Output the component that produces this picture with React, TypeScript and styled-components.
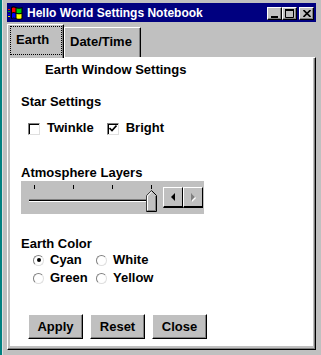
import React from "react";
import styled, { createGlobalStyle } from "styled-components";

const FONT = `"Liberation Sans", Arial, Helvetica, sans-serif`;

const Global = createGlobalStyle`
  html, body { margin: 0; padding: 0; background: #c0c0c0; }
  body { font-family: ${FONT}; }
  * { box-sizing: border-box; }
`;

const Desktop = styled.div`
  width: 321px;
  height: 355px;
  overflow: hidden;
  background: #008080;
  display: flex;
  padding-left: 2px;
`;

const Window = styled.div`
  flex: 1;
  background: #c0c0c0;
  border-left: 1px solid #dfdfdf;
  padding: 3px 5px 0 4px;
  display: flex;
  flex-direction: column;
  font: bold 13px/15px ${FONT};
  color: #000;
`;

const TitleBar = styled.div`
  height: 19px;
  background: #000080;
  display: flex;
  align-items: center;
  padding: 0 2px 0 1px;
  gap: 4px;
  color: #fff;
  font-size: 12px;
  line-height: 14px;
`;

const TitleText = styled.span`
  flex: 1;
  white-space: nowrap;
`;

const TitleControls = styled.div`
  display: flex;
  align-items: center;
  margin-top: 1px;
`;

const TitleButton = styled.div<{ $gap?: boolean }>`
  width: 15px;
  height: 13px;
  margin-left: ${(p) => (p.$gap ? 2 : 0)}px;
  background: #c0c0c0;
  border-top: 1px solid #fff;
  border-left: 1px solid #fff;
  border-right: 1px solid #000;
  border-bottom: 1px solid #000;
  box-shadow: inset -1px -1px #808080;
  display: flex;
  align-items: center;
  justify-content: center;
`;

const TabRow = styled.div`
  display: flex;
  align-items: flex-end;
  margin-top: 2px;
  height: 33px;
`;

const Tab = styled.div<{ $active?: boolean; $w: number }>`
  position: relative;
  z-index: ${(p) => (p.$active ? 1 : 0)};
  width: ${(p) => p.$w}px;
  height: ${(p) => (p.$active ? 34 : 30)}px;
  margin-bottom: ${(p) => (p.$active ? -1 : 0)}px;
  background: #c0c0c0;
  border-top: 1px solid #fff;
  border-left: 1px solid #fff;
  border-right: 1px solid #000;
  border-top-left-radius: 1px;
  border-top-right-radius: 1px;
  box-shadow: inset -1px 0 #808080;
  padding: ${(p) => (p.$active ? "1px 2px 0 2px" : "6px 0 0 5px")};
  white-space: nowrap;
`;

const FocusRing = styled.div`
  width: 52px;
  height: 29px;
  border: 1px dotted #000;
  padding: 5px 0 0 5px;
`;

const Panel = styled.div`
  height: 293px;
  border-top: 1px solid #fff;
  border-left: 1px solid #fff;
  border-right: 1px solid #000;
  border-bottom: 1px solid #000;
  box-shadow: inset -1px -1px #808080;
  padding: 0 2px 3px 2px;
  display: flex;
`;

const Content = styled.div`
  flex: 1;
  background: #fff;
  display: flex;
  flex-direction: column;
  align-items: flex-start;
  padding: 4px 0 0 11px;
`;

const Heading = styled.div`
  margin-left: 24px;
`;

const SectionLabel = styled.div<{ $mt: number }>`
  margin-top: ${(p) => p.$mt}px;
`;

const CheckRow = styled.div`
  display: flex;
  align-items: center;
  margin: 11px 0 0 7px;
  gap: 13px;
`;

const Option = styled.label`
  display: flex;
  align-items: center;
  gap: 7px;
  white-space: nowrap;
`;

const CheckBox = styled.span`
  width: 12px;
  height: 12px;
  margin-top: 2px;
  background: #fff;
  border-top: 1px solid #808080;
  border-left: 1px solid #808080;
  border-right: 1px solid #dfdfdf;
  border-bottom: 1px solid #dfdfdf;
  box-shadow: inset 1px 1px #000;
  display: flex;
  align-items: center;
  justify-content: center;
`;

const SliderBox = styled.div`
  margin-top: 1px;
  width: 183px;
  height: 33px;
  background: #c0c0c0;
  display: flex;
`;

const TrackArea = styled.div`
  position: relative;
  width: 142px;
  display: flex;
  flex-direction: column;
`;

const Ticks = styled.div`
  display: flex;
  gap: 38px;
  margin: 4px 0 0 13px;
  height: 4px;
`;

const Tick = styled.span`
  width: 1px;
  height: 4px;
  background: #000;
`;

const Track = styled.div`
  margin: 10px 0 0 8px;
  width: 126px;
  height: 3px;
  border-top: 1px solid #808080;
  background: #000;
  border-bottom: 1px solid #fff;
`;

const Thumb = styled.svg`
  position: absolute;
  left: 125px;
  top: 9px;
`;

const ArrowGroup = styled.div`
  display: flex;
  margin-top: 6px;
  height: 21px;
`;

const ArrowButton = styled.div`
  width: 20px;
  height: 21px;
  background: #c0c0c0;
  border-top: 1px solid #fff;
  border-left: 1px solid #fff;
  border-right: 1px solid #000;
  border-bottom: 2px solid #000;
  display: flex;
  align-items: center;
  justify-content: center;
`;

const RadioGrid = styled.div`
  display: grid;
  grid-template-columns: 63px auto;
  row-gap: 3px;
  margin: 1px 0 0 12px;
`;

const RadioOption = styled.label`
  display: flex;
  align-items: center;
  gap: 6px;
  white-space: nowrap;
`;

const Radio = styled.span<{ $on?: boolean }>`
  width: 11px;
  height: 11px;
  margin-top: 1px;
  border-radius: 50%;
  background: #fff;
  border: 1px solid;
  border-color: #808080 #dfdfdf #dfdfdf #808080;
  display: flex;
  align-items: center;
  justify-content: center;
  &::after {
    content: "";
    width: 4px;
    height: 4px;
    border-radius: 50%;
    background: ${(p) => (p.$on ? "#000" : "transparent")};
  }
`;

const ButtonRow = styled.div`
  display: flex;
  gap: 7px;
  margin: 29px 0 0 7px;
`;

const Button = styled.div`
  width: 55px;
  height: 25px;
  background: #c0c0c0;
  border-top: 1px solid #fff;
  border-left: 1px solid #fff;
  border-right: 1px solid #000;
  border-bottom: 1px solid #000;
  box-shadow: inset -1px -1px #808080;
  display: flex;
  align-items: center;
  justify-content: center;
`;

const AppIcon = () => (
  <svg width="15" height="14" viewBox="0 0 15 14">
    <rect x="0" y="3" width="2" height="1" fill="#f00" />
    <rect x="0" y="5" width="2" height="1" fill="#0a0" />
    <rect x="0" y="8" width="2" height="1" fill="#00f" />
    <rect x="0" y="10" width="2" height="1" fill="#dd0" />
    <path d="M3 1 Q5.5 -0.5 8 1 Q11 2.5 14.5 1 V13 Q11 14.5 8 13 Q5.5 11.5 3 13 Z" fill="#000" />
    <path d="M4 2 Q5.5 1 7.5 2 V6.5 Q5.5 5.5 4 6.5 Z" fill="#f00" />
    <path d="M8.5 2.2 Q11 3.5 13.5 2.2 V6.7 Q11 8 8.5 6.7 Z" fill="#0c0" />
    <path d="M4 7.5 Q5.5 6.5 7.5 7.5 V12 Q5.5 11 4 12 Z" fill="#00f" />
    <path d="M8.5 7.7 Q11 9 13.5 7.7 V12.2 Q11 13.5 8.5 12.2 Z" fill="#ff0" />
  </svg>
);

export default function App() {
  return (
    <>
      <Global />
      <Desktop>
        <Window>
          <TitleBar>
            <AppIcon />
            <TitleText>Hello World Settings Notebook</TitleText>
            <TitleControls>
              <TitleButton>
                <svg width="7" height="9" viewBox="0 0 7 9">
                  <rect x="0" y="7" width="7" height="2" fill="#000" />
                </svg>
              </TitleButton>
              <TitleButton>
                <svg width="9" height="9" viewBox="0 0 9 9">
                  <path d="M0.5 0.5 H8.5 V8.5 H0.5 Z" fill="none" stroke="#000" />
                  <rect x="0" y="0" width="9" height="2" fill="#000" />
                </svg>
              </TitleButton>
              <TitleButton $gap>
                <svg width="8" height="7" viewBox="0 0 8 7">
                  <path d="M0.5 0 L7.5 7 M7.5 0 L0.5 7" stroke="#000" strokeWidth="1.6" />
                </svg>
              </TitleButton>
            </TitleControls>
          </TitleBar>

          <TabRow>
            <Tab $active $w={57}>
              <FocusRing>Earth</FocusRing>
            </Tab>
            <Tab $w={77}>Date/Time</Tab>
          </TabRow>

          <Panel>
            <Content>
              <Heading>Earth Window Settings</Heading>

              <SectionLabel $mt={17}>Star Settings</SectionLabel>
              <CheckRow>
                <Option>
                  <CheckBox />
                  Twinkle
                </Option>
                <Option>
                  <CheckBox>
                    <svg width="8" height="7" viewBox="0 0 8 7">
                      <path d="M0.5 3 L3 5.5 L7.5 0.5" fill="none" stroke="#000" strokeWidth="1.6" />
                    </svg>
                  </CheckBox>
                  Bright
                </Option>
              </CheckRow>

              <SectionLabel $mt={30}>Atmosphere Layers</SectionLabel>
              <SliderBox>
                <TrackArea>
                  <Ticks>
                    <Tick />
                    <Tick />
                    <Tick />
                    <Tick />
                  </Ticks>
                  <Track />
                  <Thumb width="11" height="22" viewBox="0 0 11 22">
                    <path d="M0.5 21.5 V5.5 L5.5 0.5 L10.5 5.5 V21.5 Z" fill="#c0c0c0" />
                    <path d="M1.5 20.5 V6 L5.5 2" fill="none" stroke="#fff" />
                    <path d="M0.5 21.5 V5.5 L5.5 0.5" fill="none" stroke="#404040" />
                    <path d="M5.5 0.5 L10.5 5.5 V21.5 H0.5" fill="none" stroke="#000" />
                    <path d="M1.5 20.5 H9.5 V6" fill="none" stroke="#808080" />
                  </Thumb>
                </TrackArea>
                <ArrowGroup>
                  <ArrowButton>
                    <svg width="5" height="8" viewBox="0 0 5 8">
                      <path d="M4 0 V8 L0 4 Z" fill="#000" />
                    </svg>
                  </ArrowButton>
                  <ArrowButton>
                    <svg width="6" height="9" viewBox="0 0 6 9">
                      <path d="M2 1 V9 L6 5 Z" fill="#fff" />
                      <path d="M1 0 V8 L5 4 Z" fill="#808080" />
                    </svg>
                  </ArrowButton>
                </ArrowGroup>
              </SliderBox>

              <SectionLabel $mt={22}>Earth Color</SectionLabel>
              <RadioGrid>
                <RadioOption>
                  <Radio $on />
                  Cyan
                </RadioOption>
                <RadioOption>
                  <Radio />
                  White
                </RadioOption>
                <RadioOption>
                  <Radio />
                  Green
                </RadioOption>
                <RadioOption>
                  <Radio />
                  Yellow
                </RadioOption>
              </RadioGrid>

              <ButtonRow>
                <Button>Apply</Button>
                <Button>Reset</Button>
                <Button>Close</Button>
              </ButtonRow>
            </Content>
          </Panel>
        </Window>
      </Desktop>
    </>
  );
}
